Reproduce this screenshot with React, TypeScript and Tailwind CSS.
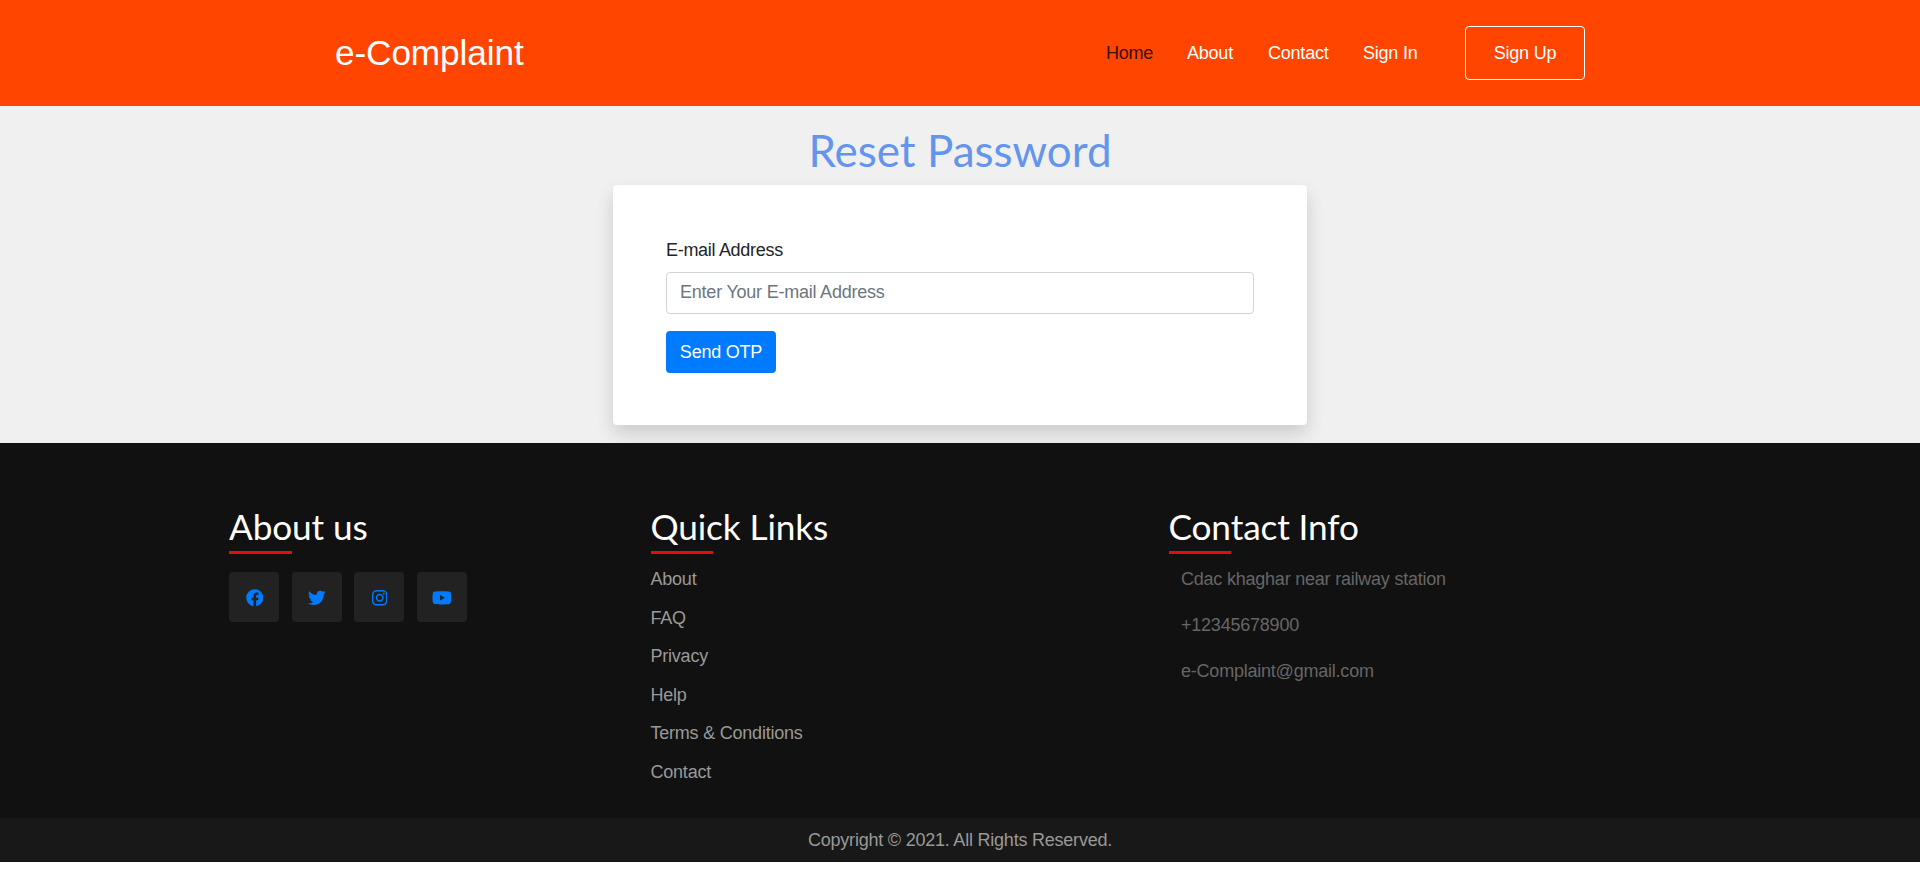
import { FaFacebook, FaTwitter, FaInstagram, FaYoutube } from "react-icons/fa";

const navLinks = [
  { label: "Home", style: "text-[#3a0d00] w-[81px]" },
  { label: "About", style: "text-white w-[81px]" },
  { label: "Contact", style: "text-white w-[95px]" },
  { label: "Sign In", style: "text-white w-[102px]" },
];

const socials = [
  { name: "Facebook", Icon: FaFacebook, size: "h-[17.6px] w-[17.6px]" },
  { name: "Twitter", Icon: FaTwitter, size: "h-[17.6px] w-[17.6px]" },
  { name: "Instagram", Icon: FaInstagram, size: "h-[17.6px] w-[15.4px]" },
  { name: "YouTube", Icon: FaYoutube, size: "h-[17.6px] w-[19.8px]" },
];

const quickLinks = ["About", "FAQ", "Privacy", "Help", "Terms & Conditions", "Contact"];
const contactInfo = ["Cdac khaghar near railway station", "+12345678900", "e-Complaint@gmail.com"];

function FooterHeading({ children }: { children: string }) {
  return (
    <div>
      <h2 className="font-['Lato',sans-serif] text-[35.2px] leading-[42px] tracking-[-0.12px] text-white">{children}</h2>
      <div className="mt-[4px] h-[3px] w-[62.5px] bg-[#e60c0c]" />
    </div>
  );
}

function Header() {
  return (
    <header className="flex h-[106px] items-center bg-[#ff4500] px-[335px]">
      <a className="mr-auto text-[35.2px] leading-[42px] tracking-[-0.1px] text-white">e-Complaint</a>
      <nav className="flex items-center">
        {navLinks.map((link) => (
          <a key={link.label} className={link.style}>
            {link.label}
          </a>
        ))}
        <a className="flex h-[54px] w-[120px] items-center justify-center rounded-[4px] border border-white text-white">
          Sign Up
        </a>
      </nav>
    </header>
  );
}

function ResetForm() {
  return (
    <main className="flex h-[337px] flex-col items-center overflow-hidden bg-[#f0f0f0] pt-[18px]">
      <h1 className="h-[61px] font-['Lato',sans-serif] text-[44px] leading-[53px] tracking-normal text-[#6495ed]">
        Reset Password
      </h1>
      <form className="h-[240px] w-[694px] rounded-[4px] bg-white px-[53px] pt-[52px] shadow-[0_9px_18px_rgba(0,0,0,0.15)]">
        <label className="block h-[35px] leading-[26px] tracking-[-0.3px] text-[#212529]">E-mail Address</label>
        <input
          type="email"
          placeholder="Enter Your E-mail Address"
          className="block h-[42px] w-full rounded-[4px] border border-[#ced4da] px-[13px] pb-[2px] outline-none placeholder:text-[#6c757d] placeholder:opacity-100"
        />
        <button type="button" className="mt-[17px] h-[42px] w-[110px] rounded-[4px] bg-[#007bff] text-white">
          Send OTP
        </button>
      </form>
    </main>
  );
}

function Footer() {
  return (
    <footer>
      <div className="grid h-[375px] grid-cols-[421.5px_518px_1fr] bg-[#111111] pt-[62px] pl-[229px]">
        <section>
          <FooterHeading>About us</FooterHeading>
          <div className="mt-[18px] flex gap-[12.6px]">
            {socials.map(({ name, Icon, size }) => (
              <a
                key={name}
                aria-label={name}
                className="flex size-[50px] items-center justify-center rounded-[4px] bg-[#222222] pt-[2px] pl-px text-[#007bff]"
              >
                <Icon className={size} />
              </a>
            ))}
          </div>
        </section>
        <section>
          <FooterHeading>Quick Links</FooterHeading>
          <ul className="mt-[12px] leading-[26px] text-[#999999]">
            {quickLinks.map((label) => (
              <li key={label} className="h-[38.6px]">
                {label}
              </li>
            ))}
          </ul>
        </section>
        <section>
          <FooterHeading>Contact Info</FooterHeading>
          <ul className="mt-[12px] pl-[12.5px] leading-[26px] text-[#666666]">
            {contactInfo.map((label) => (
              <li key={label} className="h-[46px]">
                {label}
              </li>
            ))}
          </ul>
        </section>
      </div>
      <div className="flex h-[44px] items-center justify-center border-b border-[#111111] bg-[#181818] text-[#999999]">
        Copyright © 2021. All Rights Reserved.
      </div>
    </footer>
  );
}

export default function App() {
  return (
    <div className="h-[870px] overflow-hidden bg-white font-['Liberation_Sans',Arial,sans-serif] text-[18px] leading-[26px] tracking-[-0.22px]">
      <Header />
      <ResetForm />
      <Footer />
    </div>
  );
}
